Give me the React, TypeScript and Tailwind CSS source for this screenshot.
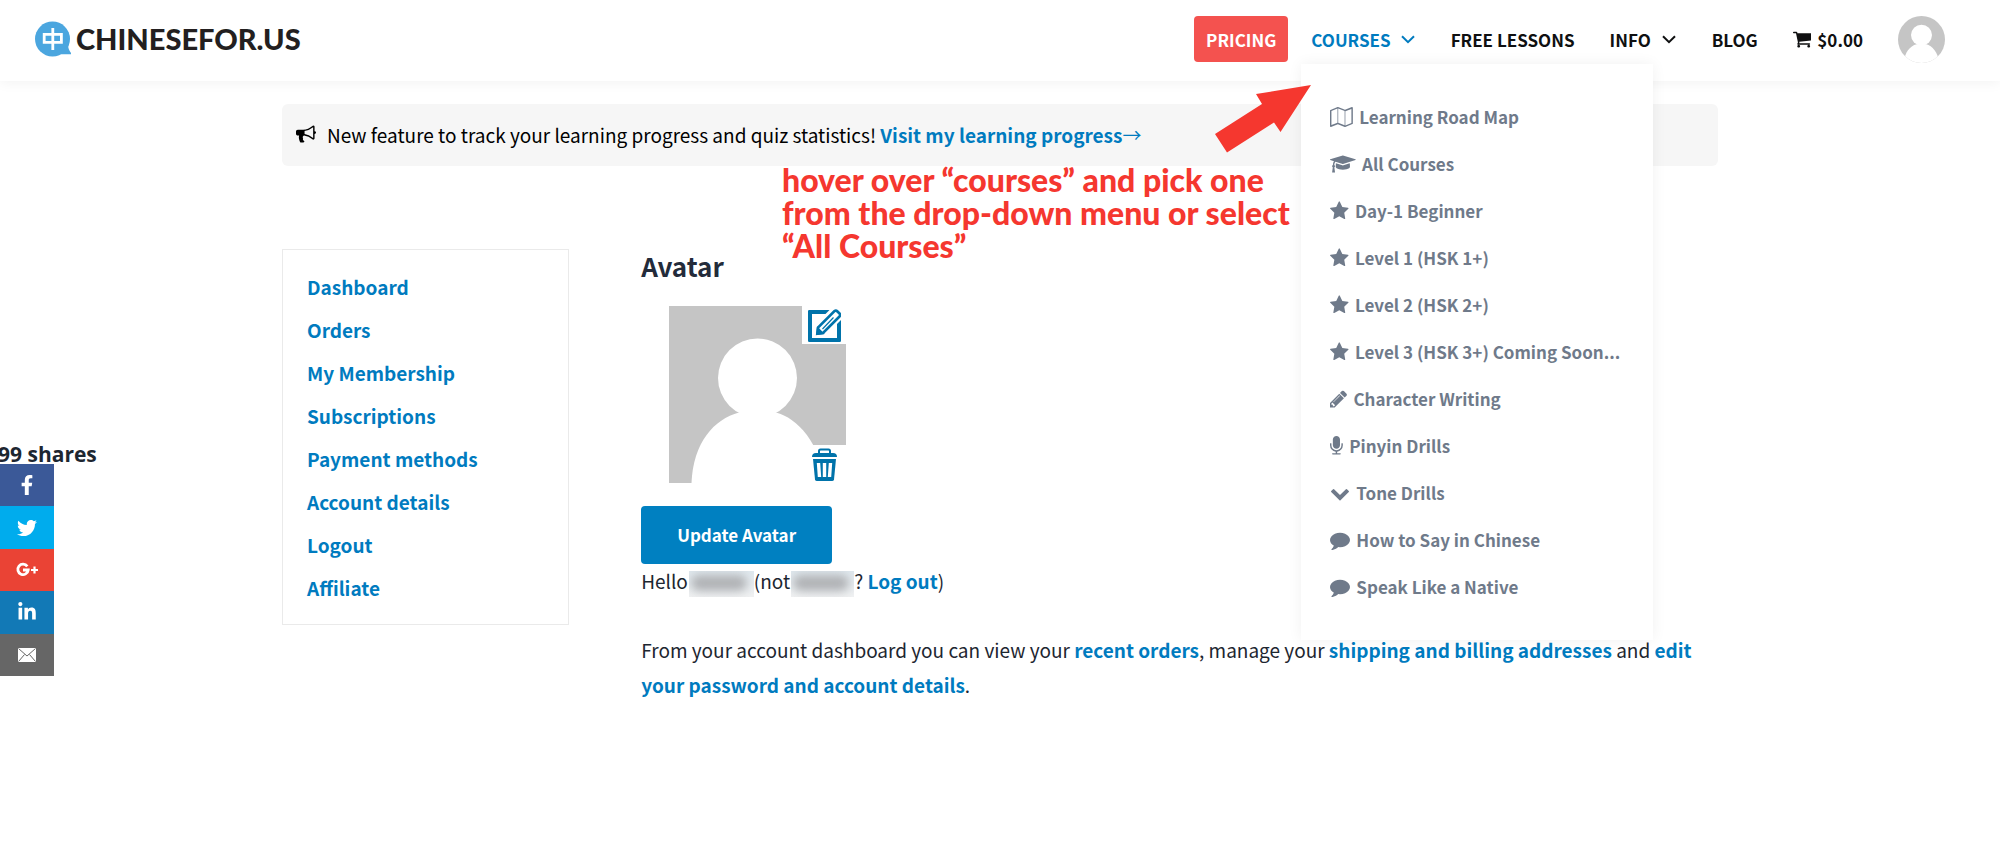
import { FaFacebookF, FaTwitter, FaLinkedinIn } from "react-icons/fa";
import { clsx } from "clsx";

interface GlyphProps {
  viewBox: string;
  path: string;
  className?: string;
}

const glyphs = {
  map: {
    viewBox: "0 0 2048 1792",
    path: "M2020 11q28 20 28 53v1408q0 20-11 36t-29 23l-640 256q-24 11-48 0l-616-246-616 246q-10 5-24 5-19 0-36-11-28-20-28-53v-1408q0-20 11-36t29-23l640-256q24-11 48 0l616 246 616-246q32-13 60 6zm-1284 121v1270l576 230v-1270zm-608 217v1270l544-217v-1270zm1792 1094v-1270l-544 217v1270z",
  },
  cap: {
    viewBox: "0 0 2304 1792",
    path: "M1774 836l18 316q4 69-82 128t-235 93.5-323 34.5-323-34.5-235-93.5-82-128l18-316 574 181q22 7 48 7t48-7zm530-324q0 23-22 31l-1120 352q-4 1-10 1t-10-1l-652-206q-43 34-71 111.5t-34 178.5q63 36 63 109 0 69-58 107l58 433q2 14-8 25-9 11-24 11h-192q-15 0-24-11-10-11-8-25l58-433q-58-38-58-107 0-73 65-111 11-207 98-330l-333-104q-22-8-22-31t22-31l1120-352q4-1 10-1t10 1l1120 352q22 8 22 31z",
  },
  star: {
    viewBox: "0 0 1664 1792",
    path: "M1664 647q0 22-26 48l-363 354 86 500q1 7 1 20 0 21-10.5 35.5t-30.5 14.5q-19 0-40-12l-449-236-449 236q-22 12-40 12-21 0-31.5-14.5t-10.5-35.5q0-6 2-20l86-500-364-354q-25-27-25-48 0-37 56-46l502-73 225-455q19-41 49-41t49 41l225 455 502 73q56 9 56 46z",
  },
  pencil: {
    viewBox: "128 0 1536 1792",
    path: "M491 1536l91-91-235-235-91 91v107h128v128h107zm523-928q0-22-22-22-10 0-17 7l-542 542q-7 7-7 17 0 22 22 22 10 0 17-7l542-542q7-7 7-17zm-54-192l416 416-832 832h-416v-416zm683 96q0 53-37 90l-166 166-416-416 166-165q36-38 90-38 53 0 91 38l235 234q37 39 37 91z",
  },
  microphone: {
    viewBox: "320 0 1152 1792",
    path: "M1472 704v128q0 221-147.5 384.5t-364.5 187.5v132h256q26 0 45 19t19 45-19 45-45 19h-640q-26 0-45-19t-19-45 19-45 45-19h256v-132q-217-24-364.5-187.5t-147.5-384.5v-128q0-26 19-45t45-19 45 19 19 45v128q0 185 131.5 316.5t316.5 131.5 316.5-131.5 131.5-316.5v-128q0-26 19-45t45-19 45 19 19 45zm-256-384v512q0 132-94 226t-226 94-226-94-94-226v-512q0-132 94-226t226-94 226 94 94 226z",
  },
  chevron: {
    viewBox: "0 0 1792 1792",
    path: "M1683 808l-742 741q-19 19-45 19t-45-19l-742-741q-19-19-19-45.5t19-45.5l166-165q19-19 45-19t45 19l531 531 531-531q19-19 45-19t45 19l166 165q19 19 19 45.5t-19 45.5z",
  },
  comment: {
    viewBox: "0 0 1792 1792",
    path: "M1792 896q0 174-120 321.5t-326 233-450 85.5q-70 0-145-8-198 175-460 242-49 14-114 22h-5q-15 0-27-10.5t-16-27.5v-1q-3-4-.5-12t2-10 4.5-9.5l6-9 7-8.5 8-9q7-8 31-34.5t34.5-38 31-39.5 32.5-51 27-59 26-76q-157-89-247.5-220t-90.5-281q0-174 120-321.5t326-233 450-85.5 450 85.5 326 233 120 321.5z",
  },
  cart: {
    viewBox: "64 0 1664 1792",
    path: "M704 1536q0 52-38 90t-90 38-90-38-38-90 38-90 90-38 90 38 38 90zm896 0q0 52-38 90t-90 38-90-38-38-90 38-90 90-38 90 38 38 90zm128-1088v512q0 24-16.5 42.5t-40.5 21.5l-1044 122q13 60 13 70 0 16-24 64h920q26 0 45 19t19 45-19 45-45 19h-1024q-26 0-45-19t-19-45q0-11 8-31.5t16-36 21.5-40 15.5-29.5l-177-823h-204q-26 0-45-19t-19-45 19-45 45-19h256q16 0 28.5 6.5t19.5 15.5 13 24.5 8 26 5.5 29.5 4.5 26h1201q26 0 45 19t19 45z",
  },
  bullhorn: {
    viewBox: "0 0 1792 1792",
    path: "M1664 640q53 0 90.5 37.5t37.5 90.5-37.5 90.5-90.5 37.5v384q0 52-38 90t-90 38q-417-347-812-380-58 19-91 66t-31 100.5 40 92.5q-20 33-23 65.5t6 58 33.5 55 48 50 61.5 50.5q-29 58-111.5 83t-168.5 11.5-132-55.5q-7-23-29.5-87.5t-32-94.5-23-89-15-101 3.5-98.5 22-110.5h-122q-66 0-113-47t-47-113v-192q0-66 47-113t113-47h480q435 0 896-384 52 0 90 38t38 90v384zm-128 604v-954q-394 302-768 343v270q377 42 768 341z",
  },
};

const courses = [
  { label: "Learning Road Map", icon: glyphs.map },
  { label: "All Courses", icon: glyphs.cap },
  { label: "Day-1 Beginner", icon: glyphs.star },
  { label: "Level 1 (HSK 1+)", icon: glyphs.star },
  { label: "Level 2 (HSK 2+)", icon: glyphs.star },
  { label: "Level 3 (HSK 3+) Coming Soon...", icon: glyphs.star },
  { label: "Character Writing", icon: glyphs.pencil },
  { label: "Pinyin Drills", icon: glyphs.microphone },
  { label: "Tone Drills", icon: glyphs.chevron },
  { label: "How to Say in Chinese", icon: glyphs.comment },
  { label: "Speak Like a Native", icon: glyphs.comment },
];

const accountLinks = [
  "Dashboard",
  "Orders",
  "My Membership",
  "Subscriptions",
  "Payment methods",
  "Account details",
  "Logout",
  "Affiliate",
];

const Glyph = ({ viewBox, path, className }: GlyphProps) => (
  <svg
    viewBox={viewBox}
    fill="currentColor"
    className={clsx("w-auto shrink-0", className)}
    aria-hidden="true"
  >
    <path d={path} />
  </svg>
);

const ChevronThin = () => (
  <svg
    viewBox="0 0 16 9"
    fill="none"
    stroke="currentColor"
    strokeWidth="2"
    className="w-4"
    aria-hidden="true"
  >
    <path d="M2 1.2 8 7.2l6-6" />
  </svg>
);

const Person = ({ className }: { className?: string }) => (
  <svg viewBox="0 0 177 177" className={className} aria-hidden="true">
    <rect width="177" height="177" fill="#c5c5c5" />
    <circle cx="88.500" cy="72" r="39.500" fill="#fff" />
    <path
      d="M22.500 177C24 137 45 113 70 106.500h37C128 112 152 137 154.500 177z"
      fill="#fff"
    />
  </svg>
);

const Logo = () => (
  <a href="#" className="flex items-center gap-[5px]">
    <svg viewBox="0 0 36 36" className="size-9" aria-hidden="true">
      <circle cx="17.500" cy="18" r="17.500" fill="#4ba6df" />
      <path d="M33 23c0 4 1 6.500 3 9v1.200H24z" fill="#4ba6df" />
      <path
        d="M9.200 13.400h17.200v8H9.200zM17.800 7v22"
        fill="none"
        stroke="#fff"
        strokeWidth="2.800"
      />
    </svg>
    <span className="font-[Lato,sans-serif] text-[29px] leading-9 font-black text-[#231f20]">
      CHINESEFOR.US
    </span>
  </a>
);

const CoursesMenu = () => (
  <ul className="absolute top-full -left-2.5 z-10 mt-0.5 w-max min-w-88 bg-white px-[29px] pt-[29px] pb-[30px] text-[17px] text-[#6f7a8a] shadow-[0_0_14px_rgba(0,0,0,0.06)]">
    {courses.map(({ label, icon }) => (
      <li key={label}>
        <a href="#" className="flex h-[47px] items-center gap-1.5">
          <Glyph {...icon} className="h-5" />
          {label}
        </a>
      </li>
    ))}
  </ul>
);

const Header = () => (
  <header className="flex h-[81px] items-center justify-between pr-[55px] pb-[3px] pl-[35px] shadow-[0_2px_12px_rgba(0,0,0,0.05)]">
    <Logo />
    <nav className="text-[17px] font-bold text-[#0f1011]">
      <ul className="flex items-center gap-[35px]">
        <li className="-mr-3">
          <a
            href="#"
            className="flex h-[46px] items-center rounded bg-[#f4524f] px-3 text-white"
          >
            PRICING
          </a>
        </li>
        <li className="relative">
          <a
            href="#"
            className="flex h-[46px] items-center gap-[9px] text-[#007bbf]"
          >
            COURSES <ChevronThin />
          </a>
          <CoursesMenu />
        </li>
        <li>
          <a href="#">FREE LESSONS</a>
        </li>
        <li>
          <a href="#" className="flex items-center gap-2.5">
            INFO <ChevronThin />
          </a>
        </li>
        <li>
          <a href="#">BLOG</a>
        </li>
        <li>
          <a href="#" className="flex items-center gap-1.5">
            <Glyph {...glyphs.cart} className="h-5" />
            $0.00
          </a>
        </li>
        <li>
          <a href="#" aria-label="Profile">
            <Person className="size-[47px] rounded-full" />
          </a>
        </li>
      </ul>
    </nav>
  </header>
);

const Notice = () => (
  <div className="flex h-[62px] items-center gap-[11px] rounded-md bg-[#f6f6f6] px-3.5 pb-0.5 text-black">
    <Glyph {...glyphs.bullhorn} className="h-5" />
    <p>
      New feature to track your learning progress and quiz statistics!{" "}
      <a href="#" className="font-bold text-[#007bbf]">
        Visit my learning progress
        <span className="font-normal">→</span>
      </a>
    </p>
  </div>
);

const Annotation = () => (
  <>
    <svg
      viewBox="0 0 96 68"
      className="absolute top-0 left-[933px] z-20 w-24"
      aria-hidden="true"
    >
      <path
        d="M96 0 41 9l6 10L0 49l12 18.500L59 37.500l6.500 9.500z"
        fill="#f5372f"
      />
    </svg>
    <p className="absolute top-[78px] left-[500px] z-20 w-[520px] font-[Lato,sans-serif] text-[32px] leading-[33px] font-black text-[#f5372f]">
      hover over “courses” and pick one
      <br />
      from the drop-down menu or select
      <br />
      “All Courses”
    </p>
  </>
);

const ShareBar = () => (
  <aside className="absolute top-[440px] left-0">
    <p className="-ml-0.5 h-6 font-['Open_Sans',sans-serif] text-[21px] leading-7 font-bold text-[#1d2630]">
      99 shares
    </p>
    <ul className="flex h-[212px] w-[54px] flex-col text-white *:flex-1 [&_a]:flex [&_a]:h-full [&_a]:items-center [&_a]:justify-center">
      <li className="bg-[#3b5998]">
        <a href="#" aria-label="Facebook">
          <FaFacebookF className="size-5" />
        </a>
      </li>
      <li className="bg-[#00aced]">
        <a href="#" aria-label="Twitter">
          <FaTwitter className="size-5" />
        </a>
      </li>
      <li className="bg-[#ea4335]">
        <a href="#" aria-label="Google Plus">
          <svg viewBox="0 0 24 16" className="w-6" aria-hidden="true">
            <path
              d="M12.300 4.400A5.200 5.200 0 1 0 13.200 8H8"
              fill="none"
              stroke="currentColor"
              strokeWidth="2.800"
            />
            <path
              d="M19.500 4.500v7M16 8h7"
              stroke="currentColor"
              strokeWidth="2.200"
            />
          </svg>
        </a>
      </li>
      <li className="bg-[#1279b6]">
        <a href="#" aria-label="LinkedIn">
          <FaLinkedinIn className="size-5" />
        </a>
      </li>
      <li className="bg-[#666]">
        <a href="#" aria-label="Email">
          <svg viewBox="0 0 18 14" className="w-[18px]" aria-hidden="true">
            <rect width="18" height="14" fill="#fff" />
            <path
              d="m.5.5 8.500 7.500L17.500.5M.5 13.500l6-7M17.500 13.500l-6-7"
              fill="none"
              stroke="#666"
            />
          </svg>
        </a>
      </li>
    </ul>
  </aside>
);

const HiddenName = ({ className }: { className?: string }) => (
  <span
    className={clsx(
      "ml-px inline-block h-[26px] overflow-hidden bg-linear-to-b from-[#dfe8ee] to-[#f0f1f2] align-middle",
      className
    )}
  >
    <span className="mt-1 ml-0.5 block h-4 w-14 rounded-full bg-[#b0b2b5] blur-[5px]" />
  </span>
);

const AvatarPicture = () => (
  <div className="relative ml-7 size-[177px]">
    <Person className="size-full" />
    <button
      type="button"
      aria-label="Edit avatar"
      className="absolute top-0 right-0 flex h-[38px] w-11 items-center justify-center bg-white text-[#0073aa]"
    >
      <svg viewBox="0 0 33 33" className="size-[33px]" aria-hidden="true">
        <path
          d="M21.500 1H1.200Q0 1 0 2.200v29.600Q0 33 1.200 33h30.600q1.200 0 1.200-1.200V11l-4 4v14H4V5h13.500z"
          fill="currentColor"
        />
        <path
          d="M9.500 24.500 10 18.500 26.500 2q1.500-1 3 .5l2 2q1.500 1.500 0 3L15 24z"
          fill="none"
          stroke="currentColor"
          strokeWidth="2.600"
        />
        <path
          d="M14.500 20 25.500 8.500M8.500 25.500l1-7 6 6z"
          stroke="currentColor"
          strokeWidth="1.200"
          fill="currentColor"
        />
      </svg>
    </button>
    <button
      type="button"
      aria-label="Delete avatar"
      className="absolute right-0 bottom-0 flex h-[38px] w-11 items-center justify-center bg-white text-[#0073aa]"
    >
      <svg
        viewBox="0 0 25 33"
        fill="none"
        stroke="currentColor"
        className="h-[33px]"
        aria-hidden="true"
      >
        <path d="M7 6V3q0-1.500 1.500-1.500h8Q18 1.500 18 3v3" strokeWidth="2" />
        <path d="M0 9q0-4 4-4h17q4 0 4 4z" fill="currentColor" stroke="none" />
        <path
          d="M1 11h23l-2 20.500Q21.700 33 20 33H5q-1.700 0-2-1.500z"
          fill="currentColor"
          stroke="none"
        />
        <path
          d="m6.500 15 1 14M12.500 15v14M18.500 15l-1 14"
          stroke="#fff"
          strokeWidth="3.400"
        />
      </svg>
    </button>
  </div>
);

const linkClass = "font-bold text-[#007bbf]";

export default function App() {
  return (
    <div className="relative min-h-screen bg-white font-['Noto_Sans_CJK_SC',sans-serif] text-[19px] leading-[35px] text-[#1d2630]">
      <Header />
      <ShareBar />
      <div className="mx-auto max-w-[1436px] pt-[23px]">
        <div className="relative">
          <Notice />
          <div className="absolute inset-x-0 -top-[19px]">
            <Annotation />
          </div>
        </div>
        <div className="mt-[83px] flex items-start gap-18">
          <nav className="w-1/5 shrink-0 border border-[#eaeaea] px-6 pt-[15px] pb-[15px]">
            <ul>
              {accountLinks.map((label) => (
                <li key={label}>
                  <a
                    href="#"
                    className="flex h-[43px] items-center font-bold text-[#007bbf]"
                  >
                    {label}
                  </a>
                </li>
              ))}
            </ul>
          </nav>
          <main className="min-w-0 flex-1">
            <h2 className="mb-6 text-[26px] leading-[33px] font-bold text-[#232b3a]">
              Avatar
            </h2>
            <AvatarPicture />
            <button
              type="button"
              className="mt-[23px] block h-[58px] rounded bg-[#0080c1] px-9 pb-0.5 text-[17px] font-bold text-white"
            >
              Update Avatar
            </button>
            <p className="-mt-px">
              Hello
              <HiddenName className="w-[65px]" />
              (not
              <HiddenName className="w-[63px]" />?{" "}
              <a href="#" className={linkClass}>
                Log out
              </a>
              )
            </p>
            <p className="mt-[34px]">
              From your account dashboard you can view your{" "}
              <a href="#" className={linkClass}>
                recent orders
              </a>
              , manage your{" "}
              <a href="#" className={linkClass}>
                shipping and billing addresses
              </a>{" "}
              and{" "}
              <a href="#" className={linkClass}>
                edit your password and account details
              </a>
              .
            </p>
          </main>
        </div>
      </div>
    </div>
  );
}
